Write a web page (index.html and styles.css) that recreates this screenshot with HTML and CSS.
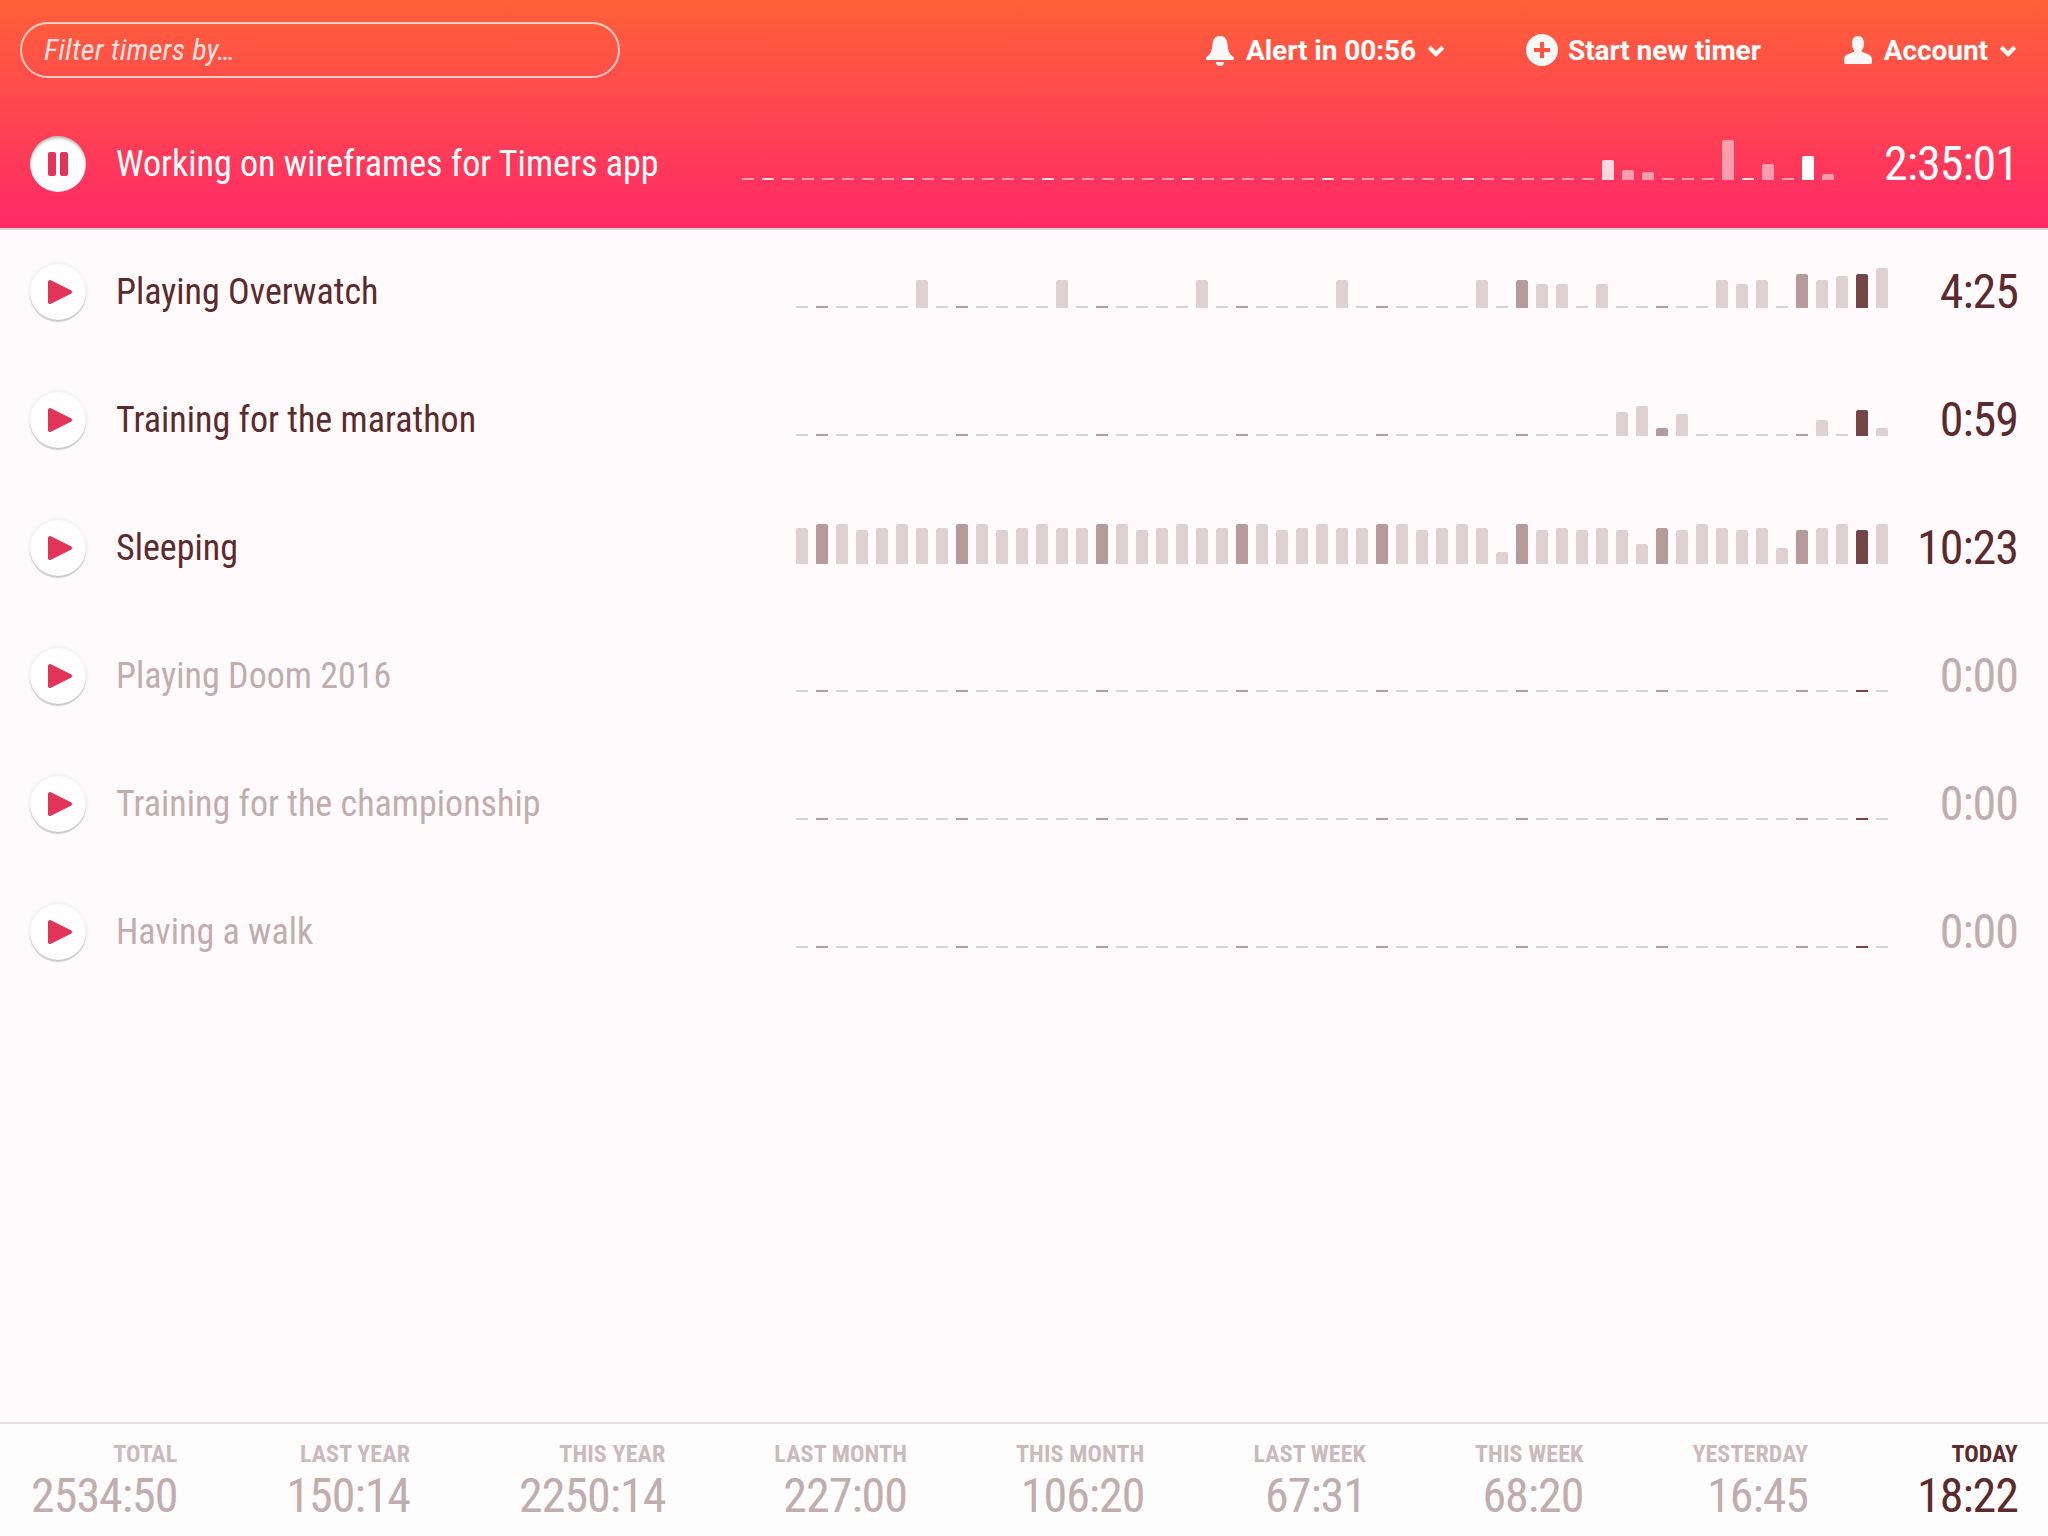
FILE: index.html
```html
<!DOCTYPE html>
<html lang="en">
<head>
<meta charset="utf-8">
<title>Timers</title>
<link rel="stylesheet" href="styles.css">
</head>
<body>
<svg class="sprite" width="0" height="0">
  <symbol id="play" viewBox="0 0 24 24"><path d="M2 2 22 12 2 22Z" fill="currentColor" stroke="currentColor" stroke-width="4" stroke-linejoin="round"/></symbol>
  <symbol id="chevron" viewBox="0 0 18 12"><path d="M2.2 2.2 9 9 15.8 2.2" fill="none" stroke="currentColor" stroke-width="4.2"/></symbol>
</svg>
<div class="app">
  <header class="header">
    <div class="toolbar">
      <input class="filter" type="text" placeholder="Filter timers by…">
      <nav class="menu">
        <a class="menu-item">
          <svg class="icon" viewBox="0 0 32 32"><path d="M16 2c4.200 0 6.500 2.600 7.200 6.500l1 6.500c.6 3.600 2 5.400 5.800 8.500V26H2v-2.500c3.800-3.100 5.200-4.900 5.800-8.500l1-6.500C9.500 4.600 11.800 2 16 2Z"/><path d="M12 28h8a4 4 0 0 1-8 0Z"/></svg>
          <span class="menu-label">Alert in 00:56</span>
          <svg class="chevron"><use href="#chevron"/></svg>
        </a>
        <a class="menu-item">
          <svg class="icon" viewBox="0 0 32 32"><path fill-rule="evenodd" d="M16 0a16 16 0 1 1 0 32 16 16 0 0 1 0-32ZM14 8v6H8v4h6v6h4v-6h6v-4h-6V8Z"/></svg>
          <span class="menu-label">Start new timer</span>
        </a>
        <a class="menu-item">
          <svg class="icon" viewBox="0 0 32 32"><path d="M16 2c3.600 0 6 2.900 6 7.500 0 3-.9 5.200-2.200 6.700-.6.900-.3 1.500.7 1.900l4.500 1.600c3.300 1.200 5 3 5 6V28a2 2 0 0 1-2 2H4a2 2 0 0 1-2-2v-2.300c0-3 1.700-4.800 5-6l4.500-1.600c1-.4 1.300-1 .7-1.900C10.900 14.700 10 12.500 10 9.500 10 4.900 12.400 2 16 2Z"/></svg>
          <span class="menu-label">Account</span>
          <svg class="chevron"><use href="#chevron"/></svg>
        </a>
      </nav>
    </div>
    <div class="timer timer-active">
      <button class="toggle"><svg class="glyph" viewBox="0 0 24 24"><rect x="0" y="0" width="8" height="24" rx="2" fill="currentColor"/><rect x="12" y="0" width="8" height="24" rx="2" fill="currentColor"/></svg></button>
      <div class="name">Working on wireframes for Timers app</div>
      <div class="chart" data-values="43:20 44:10 45:8 49:40 51:16 53:24 54:6"></div>
      <div class="time">2:35:01</div>
    </div>
  </header>
  <main class="list">
    <div class="timer">
      <button class="toggle"><svg class="glyph"><use href="#play"/></svg></button>
      <div class="name">Playing Overwatch</div>
      <div class="chart" data-values="6:28 13:28 20:28 27:28 34:28 36:28 37:24 38:24 40:24 46:28 47:24 48:28 50:34 51:28 52:32 53:34 54:40"></div>
      <div class="time">4:25</div>
    </div>
    <div class="timer">
      <button class="toggle"><svg class="glyph"><use href="#play"/></svg></button>
      <div class="name">Training for the marathon</div>
      <div class="chart" data-values="41:24 42:30 43:8 44:22 51:16 53:26 54:8"></div>
      <div class="time">0:59</div>
    </div>
    <div class="timer">
      <button class="toggle"><svg class="glyph"><use href="#play"/></svg></button>
      <div class="name">Sleeping</div>
      <div class="chart" data-values="0:36 1:40 2:40 3:34 4:36 5:40 6:36 7:36 8:40 9:40 10:34 11:36 12:40 13:36 14:36 15:40 16:40 17:34 18:36 19:40 20:36 21:36 22:40 23:40 24:34 25:36 26:40 27:36 28:36 29:40 30:40 31:34 32:36 33:40 34:36 35:12 36:40 37:34 38:36 39:34 40:36 41:34 42:20 43:36 44:34 45:40 46:36 47:34 48:36 49:16 50:34 51:36 52:40 53:34 54:40"></div>
      <div class="time">10:23</div>
    </div>
    <div class="timer timer-idle">
      <button class="toggle"><svg class="glyph"><use href="#play"/></svg></button>
      <div class="name">Playing Doom 2016</div>
      <div class="chart" data-values=""></div>
      <div class="time">0:00</div>
    </div>
    <div class="timer timer-idle">
      <button class="toggle"><svg class="glyph"><use href="#play"/></svg></button>
      <div class="name">Training for the championship</div>
      <div class="chart" data-values=""></div>
      <div class="time">0:00</div>
    </div>
    <div class="timer timer-idle">
      <button class="toggle"><svg class="glyph"><use href="#play"/></svg></button>
      <div class="name">Having a walk</div>
      <div class="chart" data-values=""></div>
      <div class="time">0:00</div>
    </div>
  </main>
  <footer class="totals">
    <div class="total"><span class="label">Total</span><span class="value">2534:50</span></div>
    <div class="total"><span class="label">Last year</span><span class="value">150:14</span></div>
    <div class="total"><span class="label">This year</span><span class="value">2250:14</span></div>
    <div class="total"><span class="label">Last month</span><span class="value">227:00</span></div>
    <div class="total"><span class="label">This month</span><span class="value">106:20</span></div>
    <div class="total"><span class="label">Last week</span><span class="value">67:31</span></div>
    <div class="total"><span class="label">This week</span><span class="value">68:20</span></div>
    <div class="total"><span class="label">Yesterday</span><span class="value">16:45</span></div>
    <div class="total total-today"><span class="label">Today</span><span class="value">18:22</span></div>
  </footer>
</div>
<script src="script.js"></script>
</body>
</html>
```
FILE: styles.css
```css
* { box-sizing: border-box; }

body {
  margin: 0;
  font-family: "Roboto Condensed", Roboto, sans-serif;
  color: #5c2a2d;
  background: #fffbfc;
}

.sprite { display: none; }

.app {
  display: flex;
  flex-direction: column;
  height: 1536px;
}

/* Header */
.header {
  height: 230px;
  border-bottom: 2px solid #dad6da;
  background: linear-gradient(#ff6138, #ff2968) padding-box;
  color: #fff;
}

.toolbar {
  display: flex;
  align-items: center;
  justify-content: space-between;
  height: 100px;
  padding: 0 31px 0 20px;
}

.filter {
  width: 600px;
  height: 56px;
  padding: 0 22px 2px;
  border: 2px solid rgba(255, 255, 255, .7);
  border-radius: 28px;
  outline: none;
  background: transparent;
  color: #fff;
  font: italic 400 30px "Roboto Condensed", Roboto, sans-serif;
  letter-spacing: .22px;
}

.filter::placeholder { color: rgba(255, 255, 255, .85); opacity: 1; }

.menu {
  display: flex;
  gap: 81px;
}

.menu-item {
  display: flex;
  align-items: center;
  gap: 10px;
  font: 700 28px/32px Roboto, sans-serif;
}

.menu-label { padding-top: 1px; letter-spacing: -.07px; }

.icon { width: 32px; height: 32px; fill: #f8f8f8; }
.chevron { width: 18px; height: 12px; margin: 2px 0 0 1px; color: #f8f8f8; }

/* Timer rows */
.timer {
  display: flex;
  align-items: center;
  height: 128px;
  padding: 0 30px;
}

.toggle {
  display: flex;
  align-items: center;
  width: 56px;
  height: 56px;
  padding: 0 0 0 18px;
  border: 0;
  border-radius: 50%;
  background: #fff;
  color: #e43358;
  box-shadow: 0 2px 1px rgba(0, 0, 0, .17), 0 0 4px rgba(0, 0, 0, .1);
}

.glyph { display: block; width: 24px; height: 24px; }

.name {
  flex: 1;
  padding-left: 30px;
  font-size: 36px;
  letter-spacing: .02px;
  line-height: 42px;
}

.chart {
  display: flex;
  align-items: flex-end;
  gap: 8px;
  height: 40px;
  margin-bottom: 8px;
}

.bar {
  width: 12px;
  border-radius: 2px 2px 0 0;
  background: #dfd1d1;
}

.bar-empty { border-radius: 0; }
.bar-week { background: #b69b9b; }
.bar-today { background: #754648; }

.time {
  width: 130px;
  font-size: 48px;
  letter-spacing: -1px;
  line-height: 56px;
  text-align: right;
}

.timer-active .toggle { box-shadow: inset 0 2px 3px rgba(0, 0, 0, .3); }
.timer-active .time { width: 184px; }
.timer-active .bar { background: rgba(255, 255, 255, .5); }
.timer-active .bar-week { background: rgba(255, 255, 255, .8); }
.timer-active .bar-today { background: #fff; }

.timer-idle .name,
.timer-idle .time { color: #c2adae; }

.list { flex: 1; margin-top: -2px; }

/* Totals */
.totals {
  display: flex;
  justify-content: space-between;
  height: 114px;
  padding: 16px 30px 0 31px;
  border-top: 2px solid #e4e0e2;
  background: #fefdfd;
  color: #c2adae;
}

.total {
  display: flex;
  flex-direction: column;
  text-align: right;
}

.label {
  color: #cbbabb;
  font-size: 24px;
  font-weight: 700;
  letter-spacing: .1px;
  line-height: 28px;
  text-transform: uppercase;
}

.value { font-size: 48px; letter-spacing: -1px; line-height: 56px; }

.total-today,
.total-today .label { color: #5c2a2d; }
```
FILE: script.js
```javascript
// Each chart covers 55 days; days without records are drawn as a 2px dash.
const DAYS = 55;
const TODAY = 53;

document.querySelectorAll('.chart').forEach((chart) => {
  const heights = Object.fromEntries(
    chart.dataset.values.split(' ').filter(Boolean).map((pair) => pair.split(':'))
  );
  for (let day = 0; day < DAYS; day += 1) {
    const bar = document.createElement('div');
    bar.className = 'bar';
    if (!heights[day]) bar.classList.add('bar-empty');
    if (day % 7 === 1) bar.classList.add('bar-week');
    if (day === TODAY) bar.classList.add('bar-today');
    bar.style.height = (heights[day] || 2) + 'px';
    chart.append(bar);
  }
});
```
